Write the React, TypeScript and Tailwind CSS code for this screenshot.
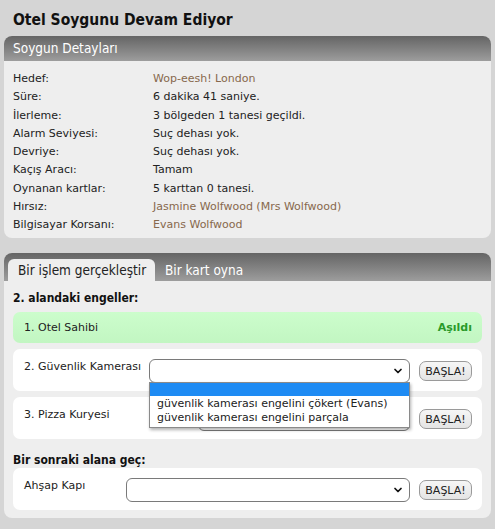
import { ChevronDown } from 'lucide-react';

const details: { label: string; value: string; link?: boolean }[] = [
    { label: 'Hedef:', value: 'Wop-eesh! London', link: true },
    { label: 'Süre:', value: '6 dakika 41 saniye.' },
    { label: 'İlerleme:', value: '3 bölgeden 1 tanesi geçildi.' },
    { label: 'Alarm Seviyesi:', value: 'Suç dehası yok.' },
    { label: 'Devriye:', value: 'Suç dehası yok.' },
    { label: 'Kaçış Aracı:', value: 'Tamam' },
    { label: 'Oynanan kartlar:', value: '5 karttan 0 tanesi.' },
    { label: 'Hırsız:', value: 'Jasmine Wolfwood (Mrs Wolfwood)', link: true },
    { label: 'Bilgisayar Korsanı:', value: 'Evans Wolfwood', link: true },
];

function Select({ width, open }: { width: string; open?: boolean }) {
    return (
        <div className={`relative ${width}`}>
            <div className="h-[24px] bg-white border border-[#7a7a7a] rounded-[6px] flex items-center justify-end pr-[5px]">
                <ChevronDown className="w-[12px] h-[12px] text-[#111]" strokeWidth={3.5} />
            </div>
            {open && (
                <div className="absolute left-0 top-[23px] w-full z-10 bg-white border border-[#8a8a8a] shadow-[1px_2px_3px_rgba(0,0,0,0.3)] text-[11px] leading-[14px] text-[#222]">
                    <div className="h-[13px] bg-[#1e8bf3]" />
                    <div className="pl-[7px] pt-[1px]">güvenlik kamerası engelini çökert (Evans)</div>
                    <div className="pl-[7px] pb-[2px]">güvenlik kamerası engelini parçala</div>
                </div>
            )}
        </div>
    );
}

function StartButton() {
    return (
        <button className="h-[20px] w-[53px] mt-[2px] rounded-[7px] border border-[#9a9a9a] bg-gradient-to-b from-[#f6f6f6] to-[#e4e4e4] text-[11px] text-[#222] leading-none">
            BAŞLA!
        </button>
    );
}

function ObstacleRow({ label, selectWidth, open }: { label: string; selectWidth: string; open?: boolean }) {
    return (
        <div className="bg-white rounded-[7px] h-[42px] pl-[11px] pr-[10px] pt-[10px] flex items-start">
            <span className="leading-[14px] mt-[1px] flex-1">{label}</span>
            <Select width={selectWidth} open={open} />
            <div className="ml-[9px]">
                <StartButton />
            </div>
        </div>
    );
}

export default function App() {
    return (
        <div className="min-h-[529px] bg-[#d5d5d5] px-[4px] pt-[10px] pb-[10px] text-[11px] text-[#222] font-['DejaVu_Sans',sans-serif]">
            <h1 className="text-[15.5px] font-bold text-[#111] pl-[9px] leading-[20px] mb-[6px] font-['DejaVu_Sans_Condensed','DejaVu_Sans',sans-serif]">
                Otel Soygunu Devam Ediyor
            </h1>

            {/* Heist details */}
            <div className="rounded-[8px] bg-[#eeeeee] overflow-hidden">
                <div className="h-[25px] bg-gradient-to-b from-[#656565] to-[#9d9d9d] text-white text-[13.5px] pl-[9px] flex items-center font-['DejaVu_Sans_Condensed','DejaVu_Sans',sans-serif]">
                    Soygun Detayları
                </div>
                <div className="px-[9px] pt-[9px] pb-[4px] grid grid-cols-[140px_1fr] leading-[18.25px]">
                    {details.map(d => (
                        <div key={d.label} className="contents">
                            <span>{d.label}</span>
                            <span className={d.link ? 'text-[#87684c]' : ''}>{d.value}</span>
                        </div>
                    ))}
                </div>
            </div>

            {/* Actions */}
            <div className="mt-[15px] rounded-[8px] bg-[#eeeeee] overflow-hidden">
                <div className="h-[28px] bg-gradient-to-b from-[#656565] to-[#9d9d9d] flex items-end pl-[4px] text-[13.5px] font-['DejaVu_Sans_Condensed','DejaVu_Sans',sans-serif]">
                    <div className="h-[22px] w-[147px] bg-[#eeeeee] rounded-t-[6px] flex items-center pl-[10px] text-[#222]">
                        Bir işlem gerçekleştir
                    </div>
                    <div className="h-[22px] flex items-center pl-[10px] text-white">Bir kart oyna</div>
                </div>
                <div className="px-[9px] pt-[9px] pb-[8px]">
                    <div className="text-[12px] font-bold leading-[16px] mb-[6px] text-[#111] font-['DejaVu_Sans_Condensed','DejaVu_Sans',sans-serif]">
                        2. alandaki engeller:
                    </div>
                    <div className="h-[31px] rounded-[7px] bg-gradient-to-b from-[#ccfdcc] to-[#c2f6c2] flex items-center justify-between pl-[11px] pr-[10px]">
                        <span>1. Otel Sahibi</span>
                        <span className="font-bold text-[#2a9a2a]">Aşıldı</span>
                    </div>
                    <div className="mt-[6px] flex flex-col gap-[6px]">
                        <ObstacleRow label="2. Güvenlik Kamerası" selectWidth="w-[261px]" open />
                        <ObstacleRow label="3. Pizza Kuryesi" selectWidth="w-[212px]" />
                    </div>
                    <div className="text-[12px] font-bold leading-[16px] mt-[13px] text-[#111] font-['DejaVu_Sans_Condensed','DejaVu_Sans',sans-serif]">
                        Bir sonraki alana geç:
                    </div>
                    <ObstacleRow label="Ahşap Kapı" selectWidth="w-[284px]" />
                </div>
            </div>
        </div>
    );
}
